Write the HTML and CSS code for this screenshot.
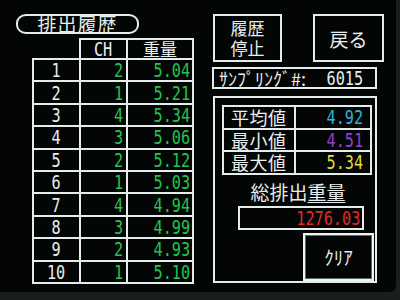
FILE: index.html
```html
<!DOCTYPE html>
<html lang="ja">
<head>
<meta charset="utf-8">
<title>排出履歴</title>
<link rel="stylesheet" href="styles.css">
</head>
<body>
<div class="screen">
  <div class="left">
    <div class="pill">排出履歴</div>
    <table class="hist">
      <thead>
        <tr><th class="blank"></th><th class="ch"><span class="num">CH</span></th><th class="wt">重量</th></tr>
      </thead>
      <tbody>
        <tr><td class="idx"><span class="num">1</span></td><td class="chv"><span class="num">2</span></td><td class="wv"><span class="num">5.04</span></td></tr>
        <tr><td class="idx"><span class="num">2</span></td><td class="chv"><span class="num">1</span></td><td class="wv"><span class="num">5.21</span></td></tr>
        <tr><td class="idx"><span class="num">3</span></td><td class="chv"><span class="num">4</span></td><td class="wv"><span class="num">5.34</span></td></tr>
        <tr><td class="idx"><span class="num">4</span></td><td class="chv"><span class="num">3</span></td><td class="wv"><span class="num">5.06</span></td></tr>
        <tr><td class="idx"><span class="num">5</span></td><td class="chv"><span class="num">2</span></td><td class="wv"><span class="num">5.12</span></td></tr>
        <tr><td class="idx"><span class="num">6</span></td><td class="chv"><span class="num">1</span></td><td class="wv"><span class="num">5.03</span></td></tr>
        <tr><td class="idx"><span class="num">7</span></td><td class="chv"><span class="num">4</span></td><td class="wv"><span class="num">4.94</span></td></tr>
        <tr><td class="idx"><span class="num">8</span></td><td class="chv"><span class="num">3</span></td><td class="wv"><span class="num">4.99</span></td></tr>
        <tr><td class="idx"><span class="num">9</span></td><td class="chv"><span class="num">2</span></td><td class="wv"><span class="num">4.93</span></td></tr>
        <tr><td class="idx"><span class="num">10</span></td><td class="chv"><span class="num">1</span></td><td class="wv"><span class="num">5.10</span></td></tr>
      </tbody>
    </table>
  </div>
  <div class="right">
    <div class="btnrow">
      <div class="btn stop"><span class="line">履歴</span><span class="line">停止</span></div>
      <div class="btn back">戻る</div>
    </div>
    <div class="sampling"><span class="slabel">ｻﾝﾌﾟﾘﾝｸﾞ#:</span><span class="num">6015</span></div>
    <div class="panel">
      <table class="stats">
        <tr><td class="lbl">平均値</td><td class="val avg"><span class="num">4.92</span></td></tr>
        <tr><td class="lbl">最小値</td><td class="val min"><span class="num">4.51</span></td></tr>
        <tr><td class="lbl">最大値</td><td class="val max"><span class="num">5.34</span></td></tr>
      </table>
      <div class="total-title">総排出<u>重量</u></div>
      <div class="total"><span class="num">1276.03</span></div>
      <div class="btn clear">ｸﾘｱ</div>
    </div>
  </div>
</div>
</body>
</html>
```
FILE: styles.css
```css
* { box-sizing: border-box; }
html, body { margin: 0; padding: 0; }
body {
  width: 400px;
  height: 300px;
  overflow: hidden;
  background: #1a1e1e;
  color: #e8eeee;
  font-family: "Noto Sans CJK JP", "Noto Sans", sans-serif;
}
.screen {
  width: 396px;
  height: 292px;
  background: #040606;
  display: flex;
  padding-top: 14px;
  border-bottom-right-radius: 6px;
}
.num {
  display: inline-block;
  vertical-align: middle;
  font-family: "DejaVu Sans Mono", "Liberation Mono", monospace;
  font-size: 20px;
  line-height: 18px;
  transform: scaleX(0.76);
  transform-origin: right center;
  white-space: pre;
}
.left {
  width: 194px;
  padding-left: 16px;
}
.pill {
  width: 123px;
  height: 20px;
  border: 2px solid #e4ecec;
  border-radius: 10px / 9px;
  font-size: 19px;
  line-height: 16px;
  text-align: center;
  letter-spacing: 1px;
}
.hist {
  margin-top: 4px;
  margin-left: 16px;
  border-collapse: collapse;
  table-layout: fixed;
  width: 162px;
}
.hist th, .hist td {
  border: 2px solid #e4ecec;
  padding: 0;
  font-size: 10px;
  line-height: 10px;
}
.hist th.blank { border-top: none; border-left: none; width: 47px; }
.hist th.ch { width: 47px; }
.hist th { height: 20px; font-weight: normal; }
.hist th .num { transform-origin: center; }
.hist th.wt {
  font-size: 17px;
  line-height: 16px;
  text-decoration: underline;
  text-underline-offset: 2px;
}
.hist td { height: 22.4px; }
.hist td.idx { text-align: center; }
.hist td.idx .num { transform-origin: center; }
.hist td.chv { text-align: right; padding-right: 3px; color: #25c250; }
.hist td.wv { text-align: right; padding-right: 2px; color: #25c250; }
.right {
  margin-left: 18px;
  width: 172px;
}
.btnrow {
  display: flex;
  gap: 31px;
  padding-left: 1px;
}
.btn {
  border: 2px solid #e4ecec;
  height: 48px;
  display: flex;
  align-items: center;
  justify-content: center;
  text-align: center;
}
.stop {
  width: 69px;
  flex-direction: column;
  gap: 2px;
  font-size: 17px;
  line-height: 18px;
}
.stop .line { display: block; height: 18px; }
.back {
  width: 71px;
  font-size: 19px;
}
.sampling {
  margin-top: 5px;
  width: 165px;
  height: 22px;
  border: 2px solid #e4ecec;
  display: flex;
  align-items: center;
  justify-content: space-between;
  padding: 0 12px 0 5px;
}
.slabel {
  font-size: 18px;
  line-height: 18px;
}
.panel {
  margin-top: 7px;
  margin-left: 1px;
  width: 164px;
  height: 187px;
  border: 2px solid #e4ecec;
  padding: 7px 0 0 7px;
}
.stats {
  border-collapse: collapse;
  table-layout: fixed;
  width: 150px;
}
.stats td {
  border: 2px solid #e4ecec;
  height: 22.6px;
  padding: 0;
  font-size: 10px;
  line-height: 10px;
}
.stats td.lbl {
  width: 72px;
  font-size: 18px;
  line-height: 18px;
  padding-left: 7px;
  letter-spacing: 0.5px;
}
.stats td.val { text-align: right; padding-right: 7px; }
.avg { color: #2ab4d6; }
.min { color: #9a3fcc; }
.max { color: #dede3e; }
.total-title {
  margin-top: 6px;
  margin-left: -7px;
  width: 160px;
  text-align: center;
  font-size: 19px;
  line-height: 22px;
  padding-left: 6px;
}
.total-title u { text-underline-offset: 2px; }
.total {
  margin-top: 3px;
  margin-left: 16px;
  width: 126px;
  height: 24px;
  border: 2px solid #e4ecec;
  padding-right: 2px;
  color: #e02a2a;
  display: flex;
  align-items: center;
  justify-content: flex-end;
}
.clear {
  margin-top: 3px;
  margin-left: 81px;
  width: 71px;
  height: 48px;
  font-size: 19px;
  border-color: #eef6f6;
  box-shadow: 0 0 0 1px #5a6a6a inset;
}
```
